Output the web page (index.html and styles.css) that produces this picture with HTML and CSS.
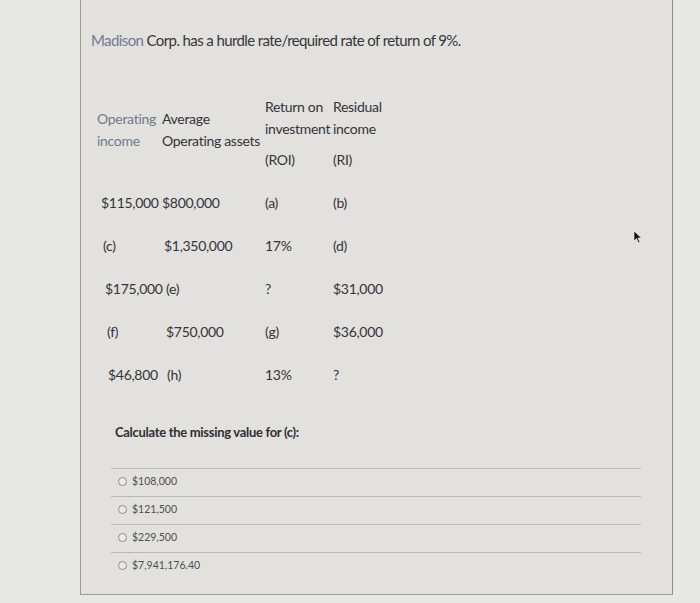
FILE: index.html
```html
<!DOCTYPE html>
<html>
<head>
<meta charset="utf-8">
<link rel="stylesheet" href="styles.css">
</head>
<body>
<div class="card">
  <p class="title"><span class="glare">Madison</span> Corp. has a hurdle rate/required rate of return of 9%.</p>

  <div class="grid head">
    <div class="hc c1"><span class="glare">Operating</span><br><span class="glare">income</span></div>
    <div class="hc c2">Average<br>Operating assets</div>
    <div class="hc c3">Return on<br>investment<div class="abbr">(ROI)</div></div>
    <div class="hc c4">Residual<br>income<div class="abbr">(RI)</div></div>
  </div>

  <div class="grid row r1">
    <div class="d1">$115,000</div><div class="d2">$800,000</div><div class="d3">(a)</div><div class="d4">(b)</div>
  </div>
  <div class="grid row r2">
    <div class="d1">(c)</div><div class="d2">$1,350,000</div><div class="d3">17%</div><div class="d4">(d)</div>
  </div>
  <div class="grid row r3">
    <div class="d1">$175,000</div><div class="d2">(e)</div><div class="d3">?</div><div class="d4">$31,000</div>
  </div>
  <div class="grid row r4">
    <div class="d1">(f)</div><div class="d2">$750,000</div><div class="d3">(g)</div><div class="d4">$36,000</div>
  </div>
  <div class="grid row r5">
    <div class="d1">$46,800</div><div class="d2">(h)</div><div class="d3">13%</div><div class="d4">?</div>
  </div>

  <p class="question">Calculate the missing value for (c):</p>

  <div class="options">
    <label class="opt"><span class="radio"></span>$108,000</label>
    <label class="opt"><span class="radio"></span>$121,500</label>
    <label class="opt"><span class="radio"></span>$229,500</label>
    <label class="opt"><span class="radio"></span>$7,941,176.40</label>
  </div>

  <svg class="cursor" width="10" height="14" viewBox="0 0 10 14"><path d="M1 1 L1 11 L3.5 8.6 L5.5 13 L7 12.3 L5 8 L8.5 8 Z" fill="#111" stroke="#fff" stroke-width="0.6"/></svg>
</div>
</body>
</html>
```

FILE: styles.css
```css
html, body {
  margin: 0;
  padding: 0;
}
body {
  background: #e7e7e5;
  font-family: Lato, "Open Sans", sans-serif;
  color: #34343a;
  width: 700px;
  height: 603px;
  overflow: hidden;
}
.card {
  display: flow-root;
  position: relative;
  margin-left: 80px;
  width: 591px;
  height: 594px;
  border-left: 1px solid #9a9a98;
  border-right: 1px solid #8e8e8c;
  border-bottom: 1px solid #9a9a98;
  background: #e2e1dd;
}
.title {
  margin: 30px 0 0 10px;
  font-size: 15px;
  line-height: 20px;
  letter-spacing: -0.6px;
  color: #36363c;
}
.glare {
  color: #6e7c8c;
}
.grid {
  display: grid;
  grid-template-columns: 65px 103px 68px 100px;
  margin-left: 16px;
  font-size: 14px;
  letter-spacing: -0.3px;
}
.head {
  margin-top: 46px;
  line-height: 22px;
}
.hc.c1, .hc.c2 {
  padding-top: 12px;
}
.abbr {
  margin-top: 9px;
}
.row {
  height: 43px;
  align-items: center;
}
.head + .row {
  margin-top: 10px;
}
.d1 {
  padding-left: 4px;
}
.r2 .d1 { padding-left: 6px; }
.r3 .d1 { padding-left: 8px; }
.r4 .d1 { padding-left: 10px; }
.r5 .d1 { padding-left: 11px; }
.r2 .d2 { padding-left: 2px; }
.r3 .d2 { padding-left: 4px; }
.r4 .d2 { padding-left: 4px; }
.r5 .d2 { padding-left: 5px; }
.question {
  margin: 26px 0 0 34px;
  font-size: 13px;
  line-height: 20px;
  letter-spacing: -0.3px;
  font-weight: bold;
  color: #2e2e34;
}
.options {
  margin: 26px 0 0 30px;
  width: 530px;
}
.opt {
  display: flex;
  align-items: center;
  gap: 5px;
  border-top: 1px solid #b9b9b6;
  padding: 4px 0 7px 7px;
  line-height: 16px;
  font-size: 10.5px;
  color: #4e4e54;
}
.radio {
  width: 7px;
  height: 7px;
  border: 1px solid #8a8a8a;
  border-radius: 50%;
  background: #ecebe8;
}
.cursor {
  position: absolute;
  left: 552px;
  top: 230px;
}
```
